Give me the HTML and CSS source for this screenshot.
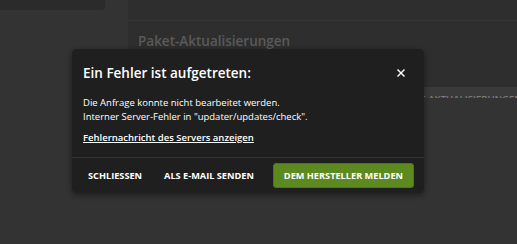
FILE: index.html
```html
<!DOCTYPE html>
<html lang="de">
<head>
<meta charset="utf-8">
<link rel="stylesheet" href="styles.css">
</head>
<body>
<div class="page">
  <aside class="sidebar">
    <div class="side-card"></div>
  </aside>
  <main class="main">
    <div class="main-top"></div>
    <section class="section">
      <h2 class="section-title">Paket-Aktualisierungen</h2>
      <div class="section-actions">
        <button class="ghost-btn">PAKET-AKTUALISIERUNGEN SUCHEN</button>
      </div>
    </section>
  </main>
</div>

<div class="modal" role="dialog">
  <header class="modal-header">
    <h1 class="modal-title">Ein Fehler ist aufgetreten:</h1>
    <button class="modal-close" aria-label="Schließen">
      <svg width="8" height="8" viewBox="0 0 8 8"><path d="M1 1L7 7M7 1L1 7" stroke="#fff" stroke-width="1.4" stroke-linecap="square"/></svg>
    </button>
  </header>
  <div class="modal-body">
    <p class="modal-text">Die Anfrage konnte nicht bearbeitet werden.<br>Interner Server-Fehler in "updater/updates/check".</p>
    <a class="modal-link" href="#">Fehlernachricht des Servers anzeigen</a>
  </div>
  <footer class="modal-footer">
    <button class="text-btn">SCHLIESSEN</button>
    <button class="text-btn">ALS E-MAIL SENDEN</button>
    <button class="primary-btn">DEM HERSTELLER MELDEN</button>
  </footer>
</div>
</body>
</html>
```
FILE: styles.css
```css
* { box-sizing: border-box; }
html, body { margin: 0; padding: 0; }
body {
  background: #333333;
  font-family: "Open Sans", "Noto Sans", sans-serif;
  width: 517px;
  height: 244px;
  overflow: hidden;
  position: relative;
}
.page {
  display: flex;
  align-items: flex-start;
}
.sidebar {
  width: 128px;
  flex: none;
}
.side-card {
  width: 105px;
  height: 10px;
  background: #2b2b2b;
  border-bottom-right-radius: 4px;
}
.main {
  flex: 1;
  min-width: 0;
  height: 98px;
  background: #2e2e2e;
  border-bottom-left-radius: 4px;
  overflow: hidden;
}
.main-top {
  height: 21px;
  border-bottom: 1px solid #363636;
}
.section {
  padding: 11px 0 0 10px;
}
.section-title {
  margin: 0;
  font-size: 13.5px;
  line-height: 18px;
  font-weight: 600;
  color: #5a5a5a;
}
.section-actions {
  display: flex;
  margin-top: 37px;
  padding-left: 246px;
}
.ghost-btn {
  flex: none;
  font-family: inherit;
  background: #3a3a3a;
  border: 0;
  height: 23px;
  padding: 0 12px;
  color: #7a7a7a;
  font-weight: 600;
  font-size: 9.6px;
  white-space: nowrap;
}

.modal {
  position: absolute;
  left: 72px;
  top: 49px;
  width: 352px;
  background: #1f1f1f;
  border-radius: 5px;
  box-shadow: 0 2px 6px rgba(0,0,0,0.45);
  color: #ffffff;
}
.modal-header {
  display: flex;
  align-items: center;
  justify-content: space-between;
  padding: 15px 18px 0 11px;
}
.modal-title {
  margin: 0;
  font-size: 13.5px;
  line-height: 18px;
  font-weight: 600;
}
.modal-close {
  background: none;
  border: 0;
  padding: 0;
  width: 10px;
  height: 10px;
  display: flex;
  align-items: center;
  justify-content: center;
}
.modal-body {
  padding: 14px 11px 11px;
}
.modal-text {
  margin: 0;
  font-size: 9.5px;
  line-height: 13.5px;
  color: #ffffff;
}
.modal-link {
  display: inline-block;
  margin-top: 8px;
  font-size: 9.5px;
  line-height: 13.5px;
  font-weight: 600;
  color: #ffffff;
  text-decoration: underline;
}
.modal-footer {
  border-top: 1px solid #333333;
  display: flex;
  align-items: center;
  padding: 5px 10px 5px 5px;
}
.text-btn {
  font-family: inherit;
  background: none;
  border: 0;
  color: #ffffff;
  font-weight: 700;
  font-size: 9.2px;
  height: 25px;
  padding: 0 11px;
  white-space: nowrap;
}
.primary-btn {
  font-family: inherit;
  margin-left: auto;
  background: #5c8a20;
  border: 1px solid #4c7719;
  border-radius: 3px;
  color: #ffffff;
  font-weight: 700;
  font-size: 9.2px;
  height: 25px;
  padding: 0 10px;
  white-space: nowrap;
}
```
